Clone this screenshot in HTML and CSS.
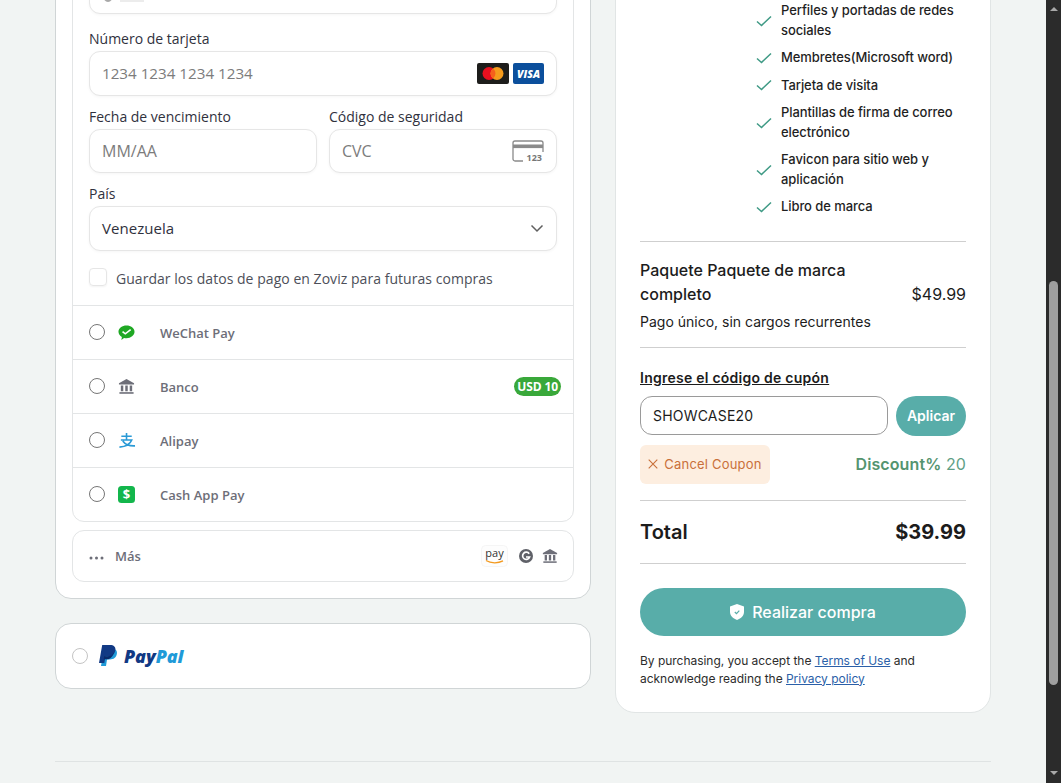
FILE: index.html
```html
<!DOCTYPE html>
<html lang="es">
<head>
<meta charset="utf-8">
<title>Pago</title>
<link rel="stylesheet" href="styles.css">
</head>
<body>
<div class="window">
  <div class="viewport">
    <div class="page">
      <main class="columns">
        <div class="left-col">
          <section class="pay-card">
            <div class="method-box">
              <div class="form">
                <div class="field field-clipped"><span class="frag-dot"></span><span class="frag-bar"></span></div>
                <label class="label label-first">Número de tarjeta</label>
                <div class="field"><span class="placeholder digits">1234 1234 1234 1234</span>
                  <span class="brands">
                    <svg class="brand" width="32" height="21" viewBox="0 0 32 21"><rect width="32" height="21" rx="2" fill="#1d1d1b"/><circle cx="12" cy="10.500" r="6.500" fill="#e8101f"/><circle cx="20" cy="10.500" r="6.500" fill="#f59b1c"/><path d="M16 5.400a6.500 6.500 0 0 1 0 10.200a6.500 6.500 0 0 1 0-10.200z" fill="#f5601c"/></svg>
                    <svg class="brand" width="31" height="21" viewBox="0 0 31 21"><rect width="31" height="21" rx="2" fill="#0b4f9c"/><text x="15.500" y="14.600" text-anchor="middle" class="visa-text">VISA</text></svg>
                  </span>
                </div>
                <div class="two">
                  <div class="cell">
                    <label class="label">Fecha de vencimiento</label>
                    <div class="field field-short"><span class="placeholder">MM/AA</span></div>
                  </div>
                  <div class="cell">
                    <label class="label">Código de seguridad</label>
                    <div class="field field-short"><span class="placeholder">CVC</span>
                      <svg class="cvc-icon" width="32" height="23" viewBox="0 0 32 23"><path d="M11 21H3a2 2 0 0 1-2-2V3a2 2 0 0 1 2-2h26a2 2 0 0 1 2 2v9" fill="none" stroke="#8a8a8a" stroke-width="1.300"/><rect x="1" y="4.500" width="30" height="3.600" fill="#8a8a8a"/><text x="30" y="21" text-anchor="end" class="cvc-text">123</text></svg>
                    </div>
                  </div>
                </div>
                <label class="label label-country">País</label>
                <div class="field field-select"><span class="value">Venezuela</span>
                  <svg width="14" height="9" viewBox="0 0 14 9"><path d="M1.500 1.500L7 7l5.500-5.500" fill="none" stroke="#5f5f5f" stroke-width="1.500"/></svg>
                </div>
                <div class="save"><span class="checkbox"></span><span class="save-text">Guardar los datos de pago en Zoviz para futuras compras</span></div>
              </div>
              <div class="row"><span class="radio"></span>
                <svg class="row-icon" width="17" height="17" viewBox="0 0 18 18"><path d="M9 1.500c4.600 0 8.500 2.900 8.500 6.800 0 3.800-3.900 6.800-8.500 6.800-.9 0-1.800-.1-2.600-.3L3.600 17l.5-3.200C2 12.500.5 10.600.5 8.300.5 4.400 4.400 1.500 9 1.500z" fill="#1fa824"/><path d="M4.800 8l2.900 2.400L13.400 6" fill="none" stroke="#fff" stroke-width="1.700"/></svg>
                <span class="row-label">WeChat Pay</span></div>
              <div class="row"><span class="radio"></span>
                <svg class="row-icon" width="17" height="17" viewBox="0 0 18 18"><path d="M9 1L1 5.500V7h16V5.500z" fill="#6d6e78"/><path d="M3 8h2.600v6H3zM7.700 8h2.600v6H7.700zM12.400 8H15v6h-2.600z" fill="#6d6e78"/><path d="M1.500 15h15v1.700h-15z" fill="#6d6e78"/></svg>
                <span class="row-label">Banco</span><span class="badge">USD 10</span></div>
              <div class="row"><span class="radio"></span>
                <svg class="row-icon" width="18" height="17" viewBox="0 0 18 18"><path d="M3 4.500h11M8.500 1V8.500M2.500 8.500h11.500C12.500 12.500 7.500 15.500 1 16M4.500 9.500c2.500 3.500 7.500 5.500 13 5.200" fill="none" stroke="#2a9ad6" stroke-width="1.700"/></svg>
                <span class="row-label row-label-tight">Alipay</span></div>
              <div class="row"><span class="radio"></span>
                <span class="cash-icon">$</span>
                <span class="row-label">Cash App Pay</span></div>
            </div>
            <div class="more">
              <svg class="dots" width="15" height="4" viewBox="0 0 15 4"><circle cx="2" cy="2" r="1.500" fill="#6d6e78"/><circle cx="7.500" cy="2" r="1.500" fill="#6d6e78"/><circle cx="13" cy="2" r="1.500" fill="#6d6e78"/></svg>
              <span class="more-label">Más</span>
              <span class="more-icons">
                <svg width="27" height="22" viewBox="0 0 27 22"><rect x=".5" y=".5" width="26" height="21" rx="4" fill="#fdfdfd" stroke="#f5f5f5"/><text x="13.500" y="12" text-anchor="middle" class="amazon-text">pay</text><path d="M5 15.500c5 3 12 3 17 .4" fill="none" stroke="#f39a1f" stroke-width="1.300"/></svg>
                <svg class="more-c" width="14" height="14" viewBox="0 0 14 14"><circle cx="7" cy="7" r="7" fill="#5f6168"/><path d="M10.200 4.800A3.600 3.600 0 1 0 10.600 8H7" fill="none" stroke="#fff" stroke-width="1.700"/></svg>
                <svg width="16" height="16" viewBox="0 0 18 18"><path d="M9 1L1 5.500V7h16V5.500z" fill="#6d6e78"/><path d="M3 8h2.600v6H3zM7.700 8h2.600v6H7.700zM12.400 8H15v6h-2.600z" fill="#6d6e78"/><path d="M1.500 15h15v1.700h-15z" fill="#6d6e78"/></svg>
              </span>
            </div>
          </section>
          <section class="paypal-card">
            <span class="radio radio-light"></span>
            <svg width="19" height="22" viewBox="0 0 19 22"><path d="M5 3.500h7.500c3.500 0 6 1.800 5.400 5.300-.6 3.800-3.400 5.700-7 5.700H8l-1 6.500H2z" fill="#1f9ad8"/><path d="M3.200 0H11c3.800 0 6 1.900 5.300 5.500-.7 3.700-3.500 5.800-7.100 5.800H6.500L5.300 18H0z" fill="#113984"/><path d="M5.200 11.300h3.300c3 0 5.500-1.500 6.700-4.300-1 3.800-3.500 7.300-7.200 7.300H4.700z" fill="#0a2a6b"/></svg>
            <span class="paypal-word"><span class="pp-dark">Pay</span><span class="pp-light">Pal</span></span>
          </section>
        </div>
        <aside class="summary">
          <ul class="features">
            <li class="feature"><svg class="check" width="16" height="12" viewBox="0 0 16 12"><path d="M1 6.500l4.500 4L15 1.500" fill="none" stroke="#3f9a85" stroke-width="1.500"/></svg><span>Perfiles y portadas de redes sociales</span></li>
            <li class="feature"><svg class="check" width="16" height="12" viewBox="0 0 16 12"><path d="M1 6.500l4.500 4L15 1.500" fill="none" stroke="#3f9a85" stroke-width="1.500"/></svg><span>Membretes(Microsoft word)</span></li>
            <li class="feature"><svg class="check" width="16" height="12" viewBox="0 0 16 12"><path d="M1 6.500l4.500 4L15 1.500" fill="none" stroke="#3f9a85" stroke-width="1.500"/></svg><span>Tarjeta de visita</span></li>
            <li class="feature"><svg class="check" width="16" height="12" viewBox="0 0 16 12"><path d="M1 6.500l4.500 4L15 1.500" fill="none" stroke="#3f9a85" stroke-width="1.500"/></svg><span>Plantillas de firma de correo electrónico</span></li>
            <li class="feature"><svg class="check" width="16" height="12" viewBox="0 0 16 12"><path d="M1 6.500l4.500 4L15 1.500" fill="none" stroke="#3f9a85" stroke-width="1.500"/></svg><span>Favicon para sitio web y aplicación</span></li>
            <li class="feature"><svg class="check" width="16" height="12" viewBox="0 0 16 12"><path d="M1 6.500l4.500 4L15 1.500" fill="none" stroke="#3f9a85" stroke-width="1.500"/></svg><span>Libro de marca</span></li>
          </ul>
          <div class="package">
            <div class="package-line">
              <h2 class="package-name">Paquete Paquete de marca completo</h2>
              <span class="package-price">$49.99</span>
            </div>
            <p class="package-note">Pago único, sin cargos recurrentes</p>
          </div>
          <div class="coupon">
            <a class="coupon-title">Ingrese el código de cupón</a>
            <div class="coupon-form">
              <div class="coupon-input">SHOWCASE20</div>
              <button class="apply">Aplicar</button>
            </div>
            <div class="coupon-status">
              <span class="cancel"><svg width="10" height="10" viewBox="0 0 10 10"><path d="M.7.700l8.600 8.600M9.300.700L.7 9.300" stroke="#c9703a" stroke-width="1.100"/></svg>Cancel Coupon</span>
              <span class="discount"><b>Discount%</b> 20</span>
            </div>
          </div>
          <div class="total"><span>Total</span><span class="total-price">$39.99</span></div>
          <button class="buy">
            <svg width="14" height="16" viewBox="0 0 14 16"><path d="M7 0l7 2.500v5.500c0 3.500-2.800 6.500-7 8-4.200-1.500-7-4.500-7-8V2.500z" fill="#fff"/><path d="M4.800 8l1.700 1.600 2.800-3" fill="none" stroke="#58ada9" stroke-width="1.200"/></svg>
            Realizar compra
          </button>
          <p class="terms">By purchasing, you accept the <a class="link">Terms of Use</a> and acknowledge reading the <a class="link">Privacy policy</a></p>
        </aside>
      </main>
      <footer class="footer"></footer>
    </div>
  </div>
  <div class="scrollbar">
    <span class="arrow-up"></span>
    <div class="track"><div class="thumb"></div></div>
    <span class="arrow-down"></span>
  </div>
</div>
</body>
</html>
```
FILE: styles.css
```css
* { box-sizing: border-box; }
html, body { margin: 0; height: 100%; overflow: hidden; }
body { background: #f1f4f3; color: #1c1c1c; font-family: "Inter", "Liberation Sans", sans-serif; }
.window { display: flex; height: 783px; }
.viewport { flex: 1; min-width: 0; overflow: hidden; }
.page { width: 936px; margin: -70px auto 0; }
.columns { display: flex; gap: 24px; align-items: flex-start; }

.left-col { width: 536px; display: flex; flex-direction: column; gap: 24px; font-family: "Open Sans", "Noto Sans", sans-serif; }
.pay-card { background: #fff; border: 1px solid #d0d5d6; border-radius: 16px; padding: 16px; display: flex; flex-direction: column; gap: 8px; }
.method-box { border: 1px solid #e3e5e6; border-radius: 12px; }
.form { padding: 21px 16px 16px; }
.field { height: 45px; border: 1px solid #e6e6e6; border-radius: 11px; padding: 0 12px; display: flex; align-items: center; justify-content: space-between; box-shadow: 0 1px 3px rgba(0,0,0,.04); background: #fff; font-size: 16px; }
.field-clipped { justify-content: flex-start; gap: 6px; align-items: center; }
.frag-dot { width: 12px; height: 20px; border-radius: 50%; background: #a8a8a8; }
.frag-bar { width: 24px; height: 20px; background: #ececec; }
.field-short { height: 44px; }
.placeholder { color: #7c7c7c; }
.digits { font-size: 15.200px; line-height: 18px; padding-bottom: 2px; }
.value { color: #30313d; font-size: 15px; letter-spacing: .05px; line-height: 18px; padding-bottom: 2px; }
.label { display: block; font-size: 14px; line-height: 20px; color: #30313d; margin: 6px 0 2px; }
.label-first { margin-top: 15px; }
.label-country { margin: 11px 0 2px; }
.two { display: flex; gap: 12px; margin-top: 5px; }
.cell { flex: 1; min-width: 0; }
.brands { display: flex; gap: 4px; }
.brand { display: block; }
.visa-text { font: italic 800 10.500px "Open Sans", sans-serif; fill: #fff; }
.cvc-text { font: 700 9px "Open Sans", sans-serif; fill: #777; }
.cvc-icon { display: block; }
.save { display: flex; align-items: center; gap: 9px; margin-top: 16px; font-size: 14px; line-height: 20px; color: #4d4f59; letter-spacing: .04px; }
.save-text { padding-top: 2px; }
.checkbox { width: 18px; height: 18px; margin-bottom: 2px; border: 1px solid #e6e6e6; border-radius: 4px; box-shadow: 0 1px 2px rgba(0,0,0,.05); }
.row { height: 54px; border-top: 1px solid #e3e5e6; display: flex; align-items: center; padding: 0 12px 0 16px; }
.radio { width: 16px; height: 16px; border: 1.500px solid #767676; border-radius: 50%; flex: none; background: #fff; }
.row .radio { margin-bottom: 2px; }
.radio-light { border-color: #c4c4c4; }
.row-icon { margin-left: 13px; flex: none; }
.cash-icon { margin-left: 13px; width: 17px; height: 17px; border-radius: 3.500px; background: #13b64c; color: #fff; font: 700 13px/17px "Open Sans", sans-serif; text-align: center; flex: none; }
.row-label { margin-left: 25px; font-size: 13px; font-weight: 600; color: #6d6e78; }
.row-label-tight { margin-left: 24px; }
.badge { margin-left: auto; background: #39a83a; color: #fff; font-size: 12px; font-weight: 700; line-height: 19px; padding: 0 3px; border-radius: 10px; letter-spacing: -.1px; }
.more { height: 52px; border: 1px solid #e3e5e6; border-radius: 12px; display: flex; align-items: center; padding: 0 15px 0 16px; }
.dots { margin-top: 3px; }
.more-label { margin-left: 11px; font-size: 13px; font-weight: 600; color: #6d6e78; }
.more-icons { margin-left: auto; display: flex; align-items: center; gap: 10px; }
.more-c { margin: 0 -1px 0 1px; }
.paypal-card { height: 66px; background: #fff; border: 1px solid #d0d5d6; border-radius: 16px; display: flex; align-items: center; padding: 0 16px; gap: 11px; }
.paypal-word { font: italic 800 18px "Open Sans", sans-serif; margin-left: -5px; letter-spacing: -.1px; }
.pp-dark { color: #113984; }
.pp-light { color: #1f9ad8; }
.amazon-text { font: 400 11px "Open Sans", sans-serif; fill: #333; }

.summary { width: 376px; background: #fff; border: 1px solid #e1e5e5; border-radius: 20px; padding: 0 24px 24px; }
.features { list-style: none; margin: 70px 0 0; padding: 0 0 24px 116px; display: flex; flex-direction: column; gap: 8px; border-bottom: 1px solid #cfcfcf; }
.feature { display: flex; align-items: center; gap: 9px; font-size: 13px; font-weight: 500; letter-spacing: -.08px; line-height: 19.500px; color: #1f1f1f; }
.check { flex: none; }
.package { padding: 16px 0 15px; border-bottom: 1px solid #cfcfcf; }
.package-line { display: flex; align-items: flex-end; justify-content: space-between; }
.package-name { margin: 0; width: 230px; font-size: 16px; line-height: 24px; font-weight: 500; }
.package-price { font-size: 16px; line-height: 24px; }
.package-note { margin: 6px 0 0; font-size: 14px; line-height: 20px; }
.coupon { padding: 21px 0 16px; border-bottom: 1px solid #cfcfcf; }
.coupon-title { display: block; font-size: 14px; font-weight: 600; line-height: 18px; text-decoration: underline; letter-spacing: .25px; }
.coupon-form { display: flex; gap: 8px; margin-top: 9px; }
.coupon-input { flex: 1; height: 39px; border: 1px solid #9a9a9a; border-radius: 12px; padding: 0 12px; font-size: 14px; line-height: 37px; letter-spacing: .2px; }
.apply { width: 70px; height: 40px; border: 0; border-radius: 20px; background: #58ada9; color: #fff; font: 600 14px "Inter", sans-serif; }
.coupon-status { display: flex; align-items: center; justify-content: space-between; margin-top: 9px; }
.cancel { height: 39px; width: 130px; background: #fdeee0; border-radius: 6px; display: flex; align-items: center; justify-content: center; gap: 6px; font-size: 13px; color: #c9703a; letter-spacing: .2px; }
.discount { font-size: 16px; color: #5f9f86; letter-spacing: .1px; }
.discount b { font-weight: 600; color: #54946f; }
.total { display: flex; justify-content: space-between; align-items: center; height: 63px; border-bottom: 1px solid #cfcfcf; font-size: 20px; font-weight: 600; }
.total-price { font-weight: 700; }
.buy { width: 100%; height: 48px; margin-top: 24px; border: 0; border-radius: 24px; background: #58ada9; color: #fff; font: 500 16px "Inter", sans-serif; display: flex; align-items: center; justify-content: center; gap: 8px; }
.terms { margin: 16px 0 0; font-size: 12px; line-height: 18px; color: #2c2c2c; letter-spacing: -.03px; }
.link { color: #2b5fa8; text-decoration: underline; }
.footer { height: 1px; background: #dfe3e3; margin-top: 48px; }

.scrollbar { width: 15px; flex: none; background: #2b2b2b; display: flex; flex-direction: column; align-items: center; }
.track { flex: 1; width: 100%; padding: 270px 3px 86px; }
.thumb { height: 100%; border-radius: 5px; background: #9f9f9f; }
.arrow-up, .arrow-down { flex: none; width: 0; height: 0; border-left: 4.500px solid transparent; border-right: 4.500px solid transparent; }
.arrow-up { border-bottom: 4px solid #a8a8a8; margin-top: 7px; }
.arrow-down { border-top: 4px solid #a8a8a8; margin-bottom: 8px; }
```
